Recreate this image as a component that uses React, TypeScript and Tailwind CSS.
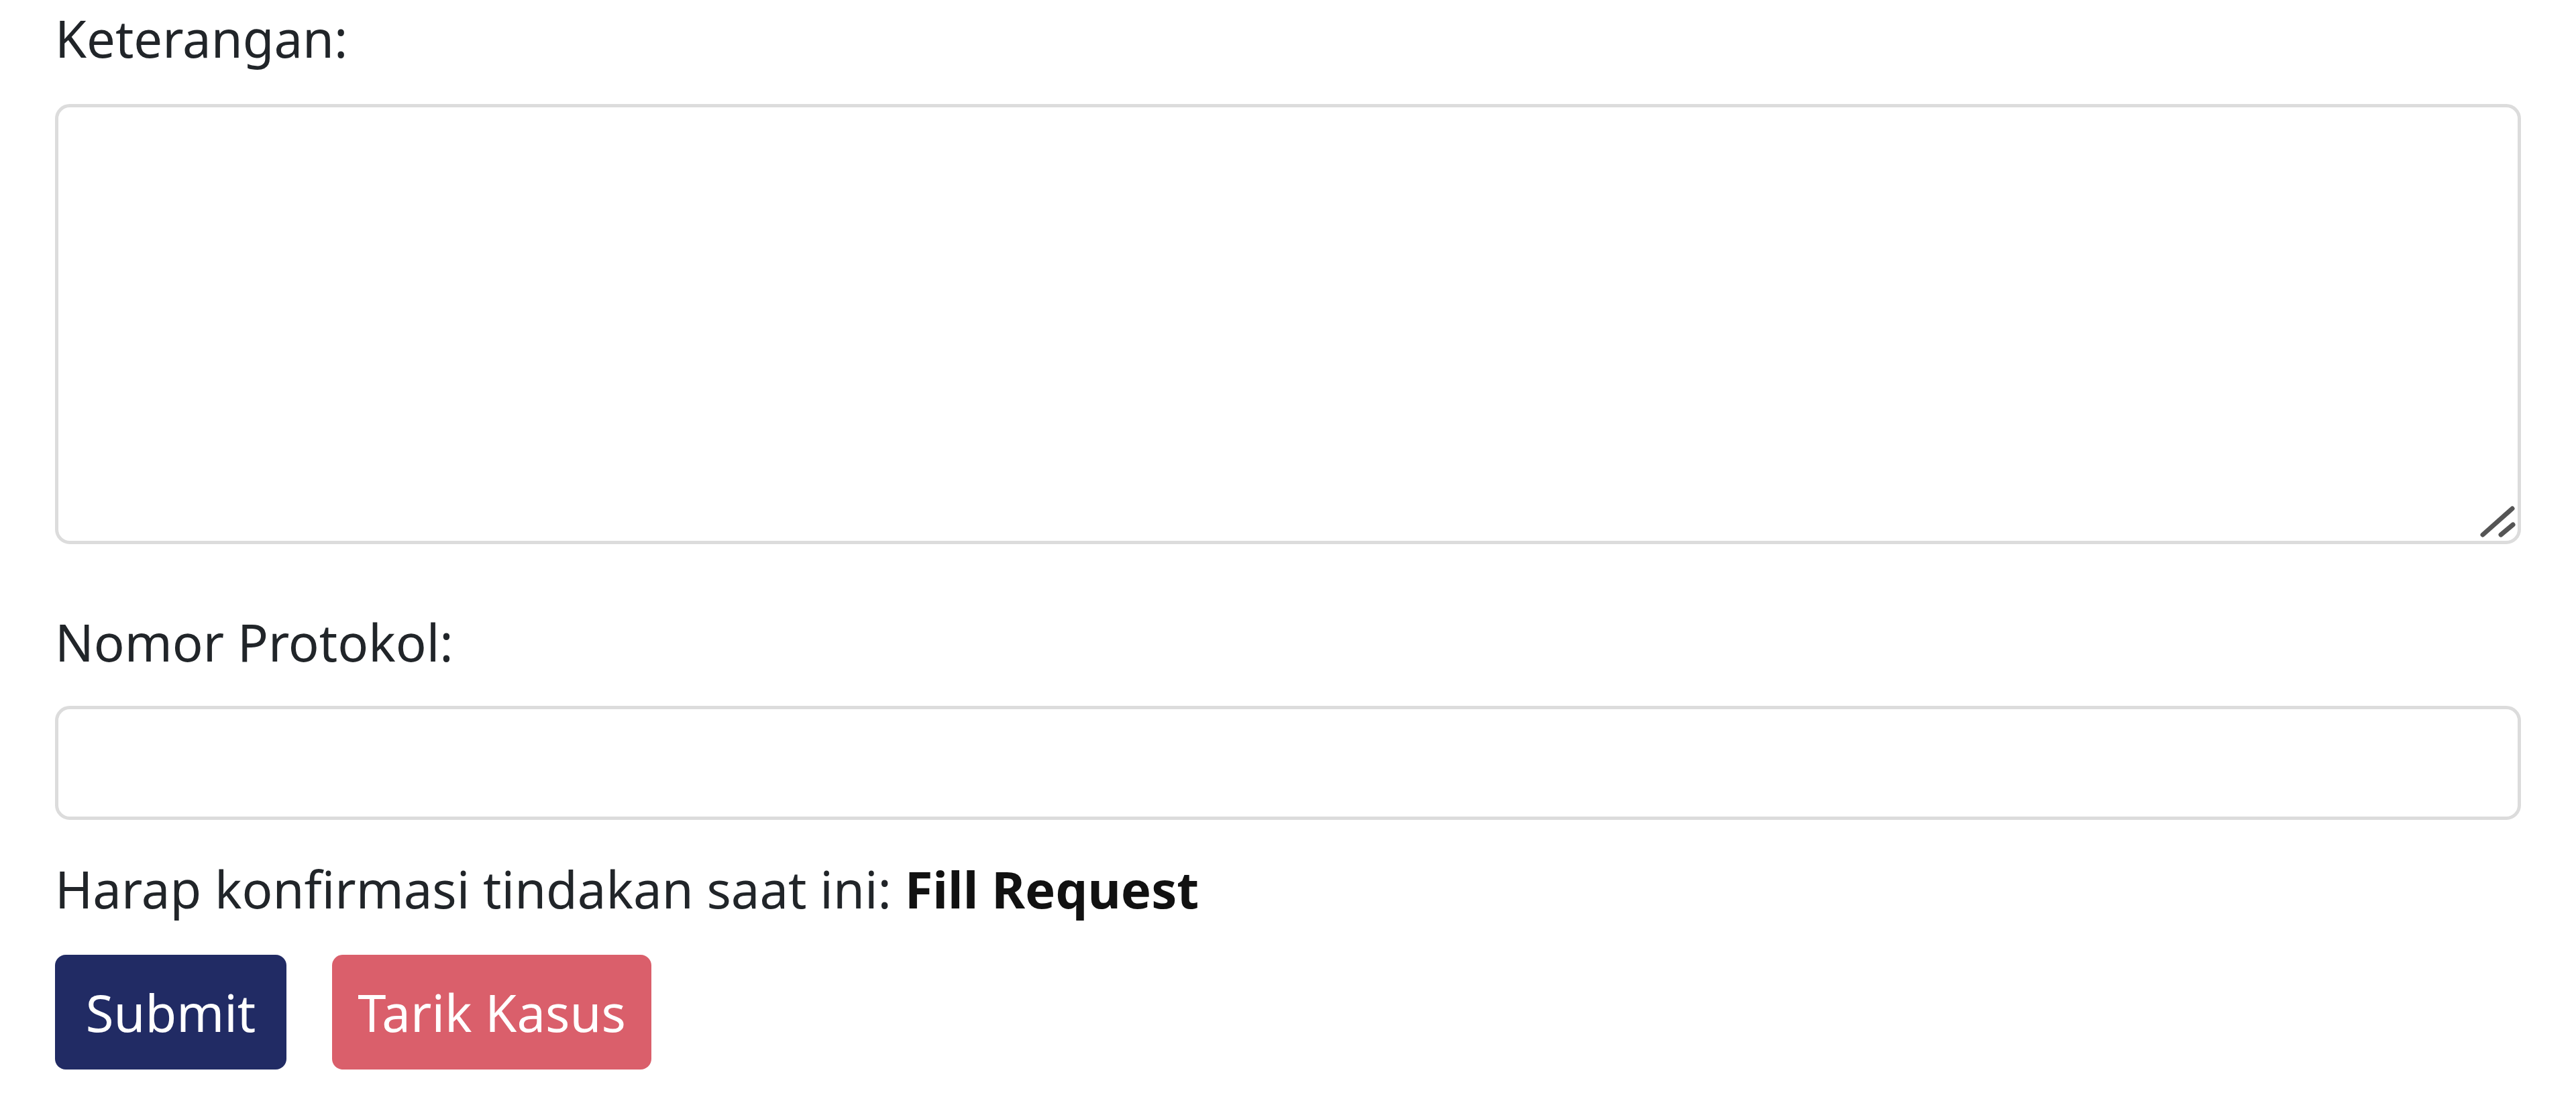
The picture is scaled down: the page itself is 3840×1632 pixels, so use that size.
import React from "react";

export default function App() {
  return (
    <div
      className="w-[3840px] h-[1632px] bg-white pl-[82px] pr-[82px] text-[#212529] overflow-hidden"
      style={{ fontFamily: '"Noto Sans", "Open Sans", sans-serif' }}
    >
      <label className="block mt-[9px] text-[76px] leading-[96px]">Keterangan:</label>
      <div className="relative mt-[50px] h-[656px]">
        <textarea
          readOnly
          className="block w-full h-full resize-none rounded-[22px] border-[5px] border-[#dcdcdc] bg-white outline-none"
        />
        <svg
          className="absolute right-[5px] bottom-[6px]"
          width="60"
          height="55"
          viewBox="0 0 60 55"
        >
          <path d="M8 47 L52 8" stroke="#555" strokeWidth="7" strokeLinecap="round" />
          <path d="M35 47 L53 32" stroke="#555" strokeWidth="7" strokeLinecap="round" />
        </svg>
      </div>
      <label className="block mt-[98px] text-[76px] leading-[96px]">Nomor Protokol:</label>
      <input
        readOnly
        className="block mt-[47px] w-full h-[170px] rounded-[22px] border-[5px] border-[#dcdcdc] bg-white outline-none"
      />
      <p className="mt-[55px] text-[76px] leading-[96px]">
        Harap konfirmasi tindakan saat ini: <span className="font-bold text-[#111]">Fill Request</span>
      </p>
      <div className="mt-[50px] flex gap-[68px]">
        <button className="h-[171px] w-[345px] rounded-[16px] bg-[#212b64] text-white text-[76px] leading-none flex items-center justify-center">
          Submit
        </button>
        <button className="h-[171px] w-[476px] rounded-[16px] bg-[#da5f6b] text-white text-[76px] leading-none flex items-center justify-center">
          Tarik Kasus
        </button>
      </div>
    </div>
  );
}
